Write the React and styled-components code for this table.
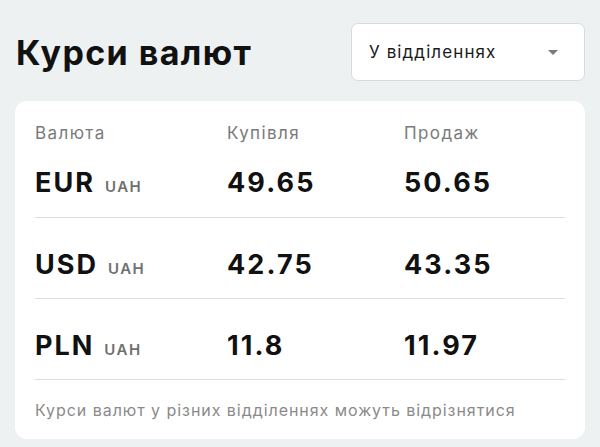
import React from "react";
import styled, { createGlobalStyle } from "styled-components";

const GlobalStyle = createGlobalStyle`
  html, body {
    margin: 0;
    padding: 0;
    background: #eef1f2;
    font-family: Inter, "Noto Sans", sans-serif;
    color: #111;
  }
`;

const Page = styled.div`
  padding: 23px 15px 0 15px;
`;

const Header = styled.div`
  display: flex;
  justify-content: space-between;
  align-items: center;
  margin-bottom: 20px;
`;

const Title = styled.h1`
  margin: 0 0 0 1px;
  font-size: 34px;
  font-weight: 700;
  letter-spacing: 1.4px;
`;

const Select = styled.div`
  width: 234px;
  height: 58px;
  box-sizing: border-box;
  background: #fff;
  border: 1px solid #d9dcdf;
  border-radius: 7px;
  display: flex;
  align-items: center;
  justify-content: space-between;
  padding: 0 26px 0 17px;
  font-size: 17px;
  letter-spacing: 1.1px;
  color: #1a1a1a;
`;

const Arrow = styled.span`
  width: 0;
  height: 0;
  border-left: 5px solid transparent;
  border-right: 5px solid transparent;
  border-top: 5px solid #7a7a7a;
`;

const Card = styled.div`
  background: #fff;
  border-radius: 12px;
  padding: 20px 20px 19px;
`;

const Grid = styled.div`
  display: grid;
  grid-template-columns: 192px 177px 1fr;
  align-items: center;
  padding: ${(p) => p.$pad};
  border-bottom: ${(p) => (p.$line ? "1px solid #dcdfe2" : "none")};
`;

const Label = styled.div`
  font-size: 17px;
  line-height: 24px;
  letter-spacing: 1.4px;
  color: #7a7a7a;
`;

const Code = styled.div`
  font-size: 27px;
  line-height: 28px;
  height: 28px;
  font-weight: 700;
  letter-spacing: 2px;
  white-space: nowrap;
`;

const Unit = styled.span`
  margin-left: 10px;
  font-size: 15px;
  font-weight: 600;
  letter-spacing: 1.5px;
  color: #6f6f6f;
`;

const Value = styled.div`
  font-size: 27px;
  line-height: 28px;
  height: 28px;
  font-weight: 700;
  letter-spacing: 2.1px;
`;

const Note = styled.div`
  padding-top: 20px;
  font-size: 16px;
  line-height: 20px;
  letter-spacing: 0.95px;
  color: #8a8a8a;
  white-space: nowrap;
`;

const rates = [
  { code: "EUR", buy: "49.65", sell: "50.65" },
  { code: "USD", buy: "42.75", sell: "43.35" },
  { code: "PLN", buy: "11.8", sell: "11.97" },
];

export default function App() {
  return (
    <Page>
      <GlobalStyle />
      <Header>
        <Title>Курси валют</Title>
        <Select>
          У відділеннях
          <Arrow />
        </Select>
      </Header>
      <Card>
        <Grid $pad="0">
          <Label>Валюта</Label>
          <Label>Купівля</Label>
          <Label>Продаж</Label>
        </Grid>
        {rates.map((r, i) => (
          <Grid key={r.code} $line $pad={i === 0 ? "24px 0 20px" : "33px 0 19px"}>
            <Code>
              {r.code}
              <Unit>UAH</Unit>
            </Code>
            <Value>{r.buy}</Value>
            <Value>{r.sell}</Value>
          </Grid>
        ))}
        <Note>Курси валют у різних відділеннях можуть відрізнятися</Note>
      </Card>
    </Page>
  );
}
